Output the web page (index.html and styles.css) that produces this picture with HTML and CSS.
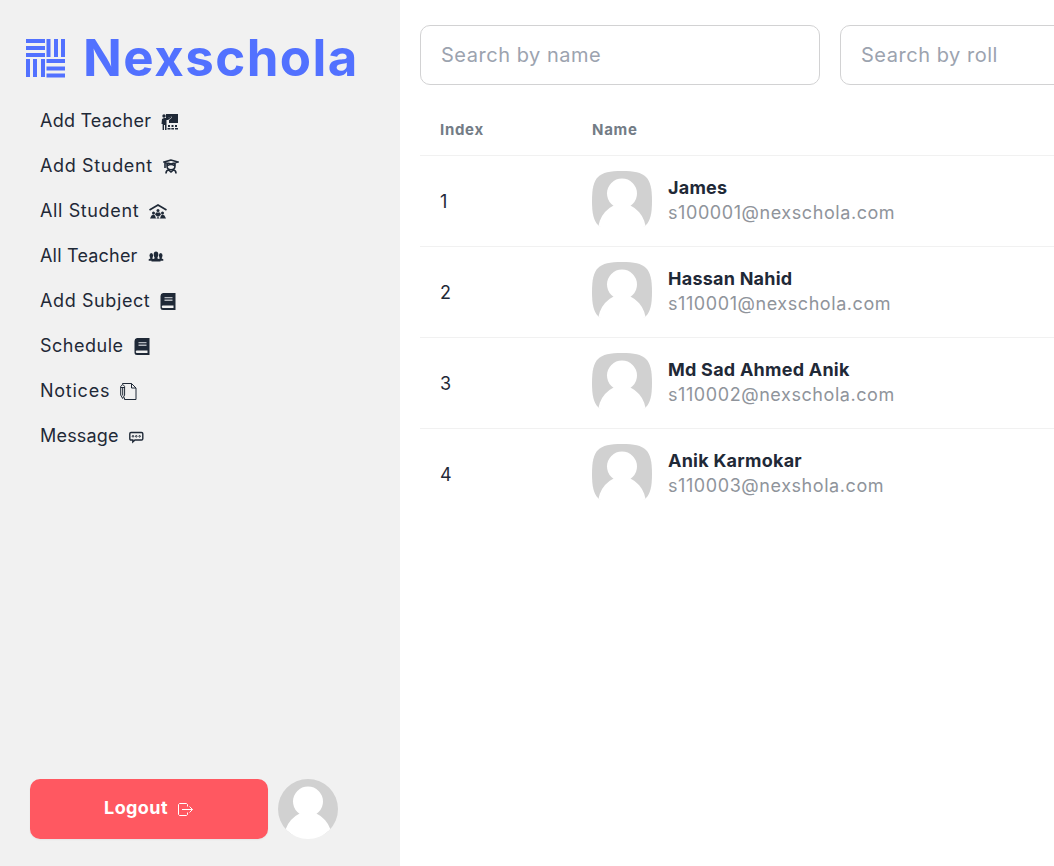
FILE: index.html
```html
<!DOCTYPE html>
<html lang="en">
<head>
<meta charset="utf-8">
<meta name="viewport" content="width=device-width, initial-scale=1">
<title>Nexschola</title>
<link rel="stylesheet" href="styles.css">
</head>
<body>

<!-- shared shapes -->
<svg class="defs" width="0" height="0">
  <symbol id="avatar" viewBox="0 0 60 60">
    <rect width="60" height="55.500" fill="#d1d1d1"/>
    <circle cx="30" cy="22.500" r="15" fill="#fff"/>
    <ellipse cx="30" cy="60" rx="24" ry="27" fill="#fff"/>
  </symbol>
  <symbol id="book" viewBox="0 0 16 18">
    <path fill="currentColor" fill-rule="evenodd" d="M3 0h12.500v17H3a2.500 2.500 0 0 1-2.500-2.500V3A3 3 0 0 1 3 0zM3 12.500a1.200 1.200 0 0 0 0 2.500h10.500v-2.500z"/>
    <path fill="#b4b8be" d="M4.500 4h8v1.300h-8zM4.500 6.600h8v1.300h-8z"/>
  </symbol>
</svg>

<div class="page">
  <div class="sidebar">
    <div class="logo">
      <svg width="40" height="40" viewBox="0 0 40 40" fill="#5271ff">
        <path d="M0 1h19v4H0zM0 8h19v4H0zM0 15h19v4H0z"/>
        <path d="M20.500 1h4v18h-4zM28 1h4v18h-4zM35 1h4v18h-4z"/>
        <path d="M0 21h4v18H0zM7 21h4v18H7zM15 21h4v18h-4z"/>
        <path d="M20.500 21H39v4H20.500zM20.500 28.500H39v4H20.500zM20.500 35.500H39v4H20.500z"/>
      </svg>
      <span class="logo-text">Nexschola</span>
    </div>

    <ul class="menu">
      <li><span class="add-teacher">Add Teacher</span>
        <svg width="18" height="18" viewBox="0 0 18 18" fill="currentColor"><path d="M5 1h12v9H8V7l3-2.500-.7-1L7 5H5z"/><circle cx="3" cy="3" r="1.700"/><path d="M1 6l2-1h4l3-1.500.5 1L7 7H5.500v10H4v-5H3v5H1.600v-6H.5z"/><path d="M7 12h2v2H7zM10.500 12h2v2h-2zM14 12h2v2h-2zM6.500 15h3v1.500h-3zM10.300 15h2.700v1.500h-2.700zM14 15h3v1.500h-3z"/></svg></li>
      <li><span class="add-student">Add Student</span>
        <svg width="16" height="18" viewBox="0 0 16 18" fill="none" stroke="currentColor" stroke-width="1.600"><path d="M8 2L1.500 4 8 6l6.500-2zM2 4.500v5.500M4 5.500V8c0 5 8 5 8 0V5.500M4.500 7.500Q8 5.500 11.500 7.500"/><path d="M3 15.500c0-2 .8-3.300 2.500-3.500L8 14l2.500-2c1.700.2 2.500 1.500 2.500 3.500"/></svg></li>
      <li><span class="all-student">All Student</span>
        <svg width="18" height="18" viewBox="0 0 18 18" fill="currentColor"><path d="M.5 7L9 2l8.500 5" fill="none" stroke="currentColor" stroke-width="1.700"/><circle cx="9" cy="7.500" r="1.500"/><circle cx="4.500" cy="10" r="1.500"/><circle cx="13.500" cy="10" r="1.500"/><path d="M7 9.500h4l1 2-2 2H8l-2-2zM2.500 12.500l2-1 1.500 1 1 3H1zM12 12.500l1.500-1 2 1 1.500 3h-6zM7.300 15.500L9 13.800l1.700 1.700z"/></svg></li>
      <li><span class="all-teacher">All Teacher</span>
        <svg width="16" height="18" viewBox="0 0 16 18" fill="currentColor"><ellipse cx="8" cy="6.500" rx="2.300" ry="3"/><ellipse cx="3.300" cy="7.500" rx="1.800" ry="2.500"/><ellipse cx="12.700" cy="7.500" rx="1.800" ry="2.500"/><path d="M6.500 8h3v2.500l3 1.200v1.800h-9v-1.800l3-1.200zM2.300 9h2v1.500l1 .5-2 1.700H.7v-1.500l1.600-.7zM11.700 9h2v1.500l1.600.7v1.500h-2.600l-2-1.700 1-.5z"/></svg></li>
      <li><span class="add-subject">Add Subject</span>
        <svg width="16" height="18"><use href="#book"/></svg></li>
      <li><span class="schedule">Schedule</span>
        <svg width="16" height="18"><use href="#book"/></svg></li>
      <li><span class="notices">Notices</span>
        <svg width="17" height="18" viewBox="0 0 17 18" fill="none" stroke="currentColor"><path d="M2.500 1.500V.5h9l4.500 4.500v11.500H4.500v-2M11.500.5V5H16"/><path d="M.7 3.500Q2.700 0 4.600 3.500v8.500L2.700 15.500.7 12zM.7 4.500h3.900M2.700 4.500v8"/></svg></li>
      <li><span class="message">Message</span>
        <svg width="15" height="18" viewBox="0 0 15 18" fill="none" stroke="currentColor" stroke-width="1.400"><path d="M2 4.500h10.500q1.300 0 1.300 1.300v5q0 1.200-1.300 1.200H6L3.800 14V12H2q-1.200 0-1.200-1.200v-5Q.8 4.500 2 4.500z"/><g stroke-width="1"><circle cx="4" cy="8.300" r=".8"/><circle cx="7.300" cy="8.300" r=".8"/><circle cx="10.600" cy="8.300" r=".8"/></g></svg></li>
    </ul>

    <div class="sidebar-bottom">
      <button type="button" class="logout"><span>Logout</span>
        <svg width="16" height="14" viewBox="0 0 16 14" fill="none" stroke="#fff"><path d="M9.500 3.500V1.500l-1-1h-7l-1 1v10l1 1h7l1-1v-2M4 6.500h10.500M11.500 3.500l3 3-3 3"/></svg>
      </button>
      <svg class="avatar-round" width="60" height="60"><use href="#avatar"/></svg>
    </div>
  </div>

  <div class="content">
    <div class="search">
      <input type="text" placeholder="Search by name">
      <input type="text" placeholder="Search by roll">
    </div>

    <table>
      <thead>
        <tr><th class="index">Index</th><th>Name</th></tr>
      </thead>
      <tbody>
        <tr>
          <td>1</td>
          <td><div class="person">
            <svg class="avatar" width="60" height="60"><use href="#avatar"/></svg>
            <div class="info"><div class="name">James</div><div class="email">s100001@nexschola.com</div></div>
          </div></td>
        </tr>
        <tr>
          <td>2</td>
          <td><div class="person">
            <svg class="avatar" width="60" height="60"><use href="#avatar"/></svg>
            <div class="info"><div class="name">Hassan Nahid</div><div class="email">s110001@nexschola.com</div></div>
          </div></td>
        </tr>
        <tr>
          <td>3</td>
          <td><div class="person">
            <svg class="avatar" width="60" height="60"><use href="#avatar"/></svg>
            <div class="info"><div class="name">Md Sad Ahmed Anik</div><div class="email">s110002@nexschola.com</div></div>
          </div></td>
        </tr>
        <tr>
          <td>4</td>
          <td><div class="person">
            <svg class="avatar" width="60" height="60"><use href="#avatar"/></svg>
            <div class="info"><div class="name">Anik Karmokar</div><div class="email">s110003@nexshola.com</div></div>
          </div></td>
        </tr>
      </tbody>
    </table>
  </div>
</div>

</body>
</html>
```
FILE: styles.css
```css
* {
    box-sizing: border-box;
}

body {
    margin: 0;
    font-family: Inter, "Liberation Sans", sans-serif;
    font-size: 18px;
    color: #1f2937;
    background-color: #fff;
}

.defs {
    position: absolute;
}

.page {
    display: flex;
    height: 100vh;
    overflow: hidden;
}

/* Sidebar */
.sidebar {
    display: flex;
    flex-direction: column;
    flex: 0 0 400px;
    padding: 25px 30px 27px 26px;
    background-color: #f1f1f1;
}

.logo {
    display: flex;
    align-items: center;
    height: 65px;
    gap: 17px;
}

.logo-text {
    font-size: 51px;
    font-weight: 700;
    line-height: 65px;
    letter-spacing: 1.45px;
    color: #5271ff;
}

.menu {
    list-style: none;
    margin: 8px 0 0 14px;
    padding: 0;
}

.menu li {
    display: flex;
    align-items: center;
    gap: 10px;
    height: 45px;
}

.menu svg {
    margin-top: 2px;
}

.add-teacher { letter-spacing: 0.22px; }
.add-student { letter-spacing: 0.65px; }
.all-student { letter-spacing: 0.62px; }
.all-teacher { letter-spacing: 0.2px; }
.add-subject { letter-spacing: 0.6px; }
.schedule { letter-spacing: 0.5px; }
.notices { letter-spacing: 0.75px; }
.message { letter-spacing: 0.2px; }

.sidebar-bottom {
    display: flex;
    gap: 10px;
    margin: auto 0 0 4px;
}

.logout {
    display: flex;
    align-items: center;
    justify-content: center;
    gap: 10px;
    width: 238px;
    height: 60px;
    padding: 0 0 3px;
    border: none;
    border-radius: 10px;
    background-color: #ff5861;
    box-shadow: 0 1px 2px rgba(0,0,0,0.05);
    color: white;
    font: 700 18px Inter, sans-serif;
    letter-spacing: 0.4px;
    cursor: pointer;
}

.logout svg {
    margin-top: 4px;
}

.avatar-round {
    border-radius: 50%;
}

/* Students list */
.content {
    flex: 1;
    min-width: 0;
    padding: 25px 0 0 20px;
}

.search {
    display: flex;
    gap: 20px;
}

.search input {
    flex: 0 0 400px;
    height: 60px;
    padding: 0 20px;
    border: 1px solid #d2d2d3;
    border-radius: 10px;
    background-color: #fff;
    font: 400 20px Inter, sans-serif;
    letter-spacing: 0.52px;
}

.search input::placeholder {
    color: #9ca3af;
}

table {
    width: 100%;
    margin-top: 19px;
    border-collapse: separate;
    border-spacing: 0;
    text-align: left;
}

th {
    height: 52px;
    padding: 0 20px;
    border-bottom: 1px solid #f1f1f1;
    font-size: 15px;
    font-weight: 700;
    letter-spacing: 0.7px;
    color: #737c86;
}

th.index {
    width: 152px;
}

td {
    height: 91px;
    padding: 0 20px;
    border-bottom: 1px solid #f1f1f1;
}

tbody tr:last-child td {
    border-bottom-color: transparent;
}

.person {
    display: flex;
    align-items: center;
    gap: 16px;
}

.avatar {
    clip-path: path("M30 0C6 0 0 6 0 30s6 30 30 30 30-6 30-30S54 0 30 0Z");
}

.info {
    padding-bottom: 2px;
}

.name {
    font-weight: 700;
    line-height: 25px;
    letter-spacing: 0.24px;
}

.email {
    line-height: 25px;
    letter-spacing: 0.57px;
    color: #8f949b;
}
```
